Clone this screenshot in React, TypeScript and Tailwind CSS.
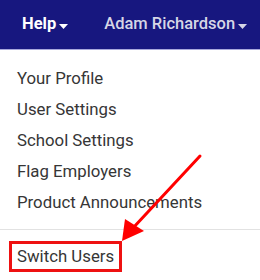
import React from "react";

function Caret({ color }: { color: string }) {
  return (
    <svg width="9" height="5" viewBox="0 0 9 5" className="ml-[3px] mt-[3px]">
      <polygon points="0,0 9,0 4.5,5" fill={color} />
    </svg>
  );
}

export default function App() {
  const items = [
    "Your Profile",
    "User Settings",
    "School Settings",
    "Flag Employers",
    "Product Announcements",
  ];
  return (
    <div
      className="relative w-[260px] h-[280px] bg-white overflow-hidden"
      style={{ fontFamily: "Roboto, 'Liberation Sans', sans-serif" }}
    >
      <div className="h-[50px] bg-[#17177f] border-b border-[#a8a8dc] flex items-center text-[16.5px]">
        <div className="ml-[22px] flex items-center font-bold text-white">
          Help
          <Caret color="#ffffff" />
        </div>
        <div className="ml-[36px] flex items-center text-[#d6d6e6] font-medium">
          Adam Richardson
          <Caret color="#d6d6e6" />
        </div>
      </div>
      <div className="pt-[13px] text-[16.8px] text-[#363636]">
        {items.map((t) => (
          <div key={t} className="h-[31px] leading-[31px] pl-[17px]">
            {t}
          </div>
        ))}
        <div className="mt-[11px] mb-[11px] h-px bg-[#e2e2e2]" />
        <div className="ml-[9px] w-[113px] h-[31px] border-[3px] border-[#ee1111] leading-[25px] pl-[5px]">
          Switch Users
        </div>
      </div>
      <svg
        className="absolute left-0 top-0 pointer-events-none"
        width="260"
        height="280"
        viewBox="0 0 260 280"
      >
        <line x1="200" y1="156" x2="133" y2="228" stroke="#ff0000" strokeWidth="3" strokeLinecap="round" />
        <polygon points="122,241 125,219 144,231" fill="#ff0000" />
      </svg>
    </div>
  );
}
